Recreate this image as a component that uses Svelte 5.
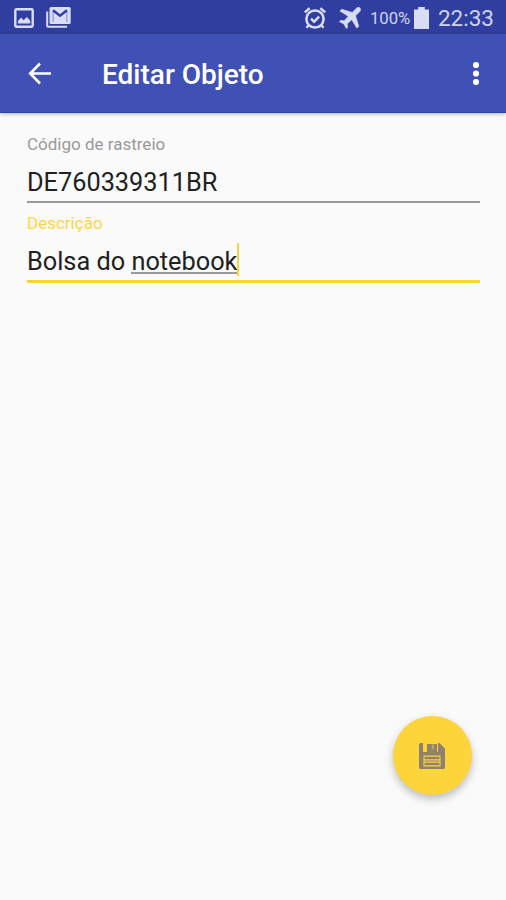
<script lang="ts">
    let code = "DE760339311BR";
    let words = ["Bolsa do ", "notebook"];
</script>

<div class="screen">
    <div class="status">
        <svg class="photo" width="20" height="20" viewBox="0 0 20 20">
            <rect x="1.3" y="1.3" width="17.4" height="17.4" rx="1.2" />
            <path d="M4 15.5V13l3.2-3.4 2.3 2.6L13 9l3.2 3.8v2.7z" />
        </svg>
        <svg class="mail" width="25" height="21" viewBox="0 0 25 21">
            <path class="back" d="M1.2 4.5v14.3q0 1 1 1H21" />
            <rect x="3.5" y="0" width="21.2" height="17" rx="1.6" />
            <path class="fold" d="M7.2 15V4M20.8 15V4" />
            <path class="flap" d="M7 3.2l7 5.6 7-5.6" />
        </svg>
        <span class="space"></span>
        <svg class="alarm" width="24" height="24" viewBox="0 0 24 24">
            <circle cx="12" cy="13" r="8.6" />
            <path d="M1.8 6.4l4.8-4.2M22.2 6.4l-4.8-4.2M5.5 19.5l-2 2.3M18.5 19.5l2 2.3M8 12.7l3.1 3.1 5-5.2" />
        </svg>
        <svg class="plane" width="22" height="22" viewBox="0 0 22 22">
            <path d="M21 1c-1.1-1.1-2.7-.7-3.8.4l-4 4L2.7 2.2.8 4.1l8.5 5.2-4.2 4.5-3.3-.5L.4 14.7l4.5 2.4 2.4 4.5 1.4-1.4-.5-3.3 4.5-4.2 5.2 8.5 1.9-1.9-3.2-10.5 4-4C21.7 3.7 22.1 2.1 21 1z" />
        </svg>
        <span class="percent">100%</span>
        <svg class="battery" width="15" height="22" viewBox="0 0 15 22">
            <path d="M4.2 0h6.6v2.5H15V22H0V2.5h4.2z" />
        </svg>
        <span class="clock">22:33</span>
    </div>
    <header>
        <button class="back-button" aria-label="Voltar">
            <svg width="24" height="24" viewBox="0 0 24 24">
                <path d="M23 12.5H2.5M12 2.5L2.2 12.5 12 22.5" />
            </svg>
        </button>
        <h1>Editar Objeto</h1>
        <button class="more" aria-label="Mais">
            <svg width="8" height="24" viewBox="0 0 8 24">
                <circle cx="4" cy="4" r="3.1" />
                <circle cx="4" cy="12.5" r="3.1" />
                <circle cx="4" cy="21" r="3.1" />
            </svg>
        </button>
    </header>
    <main>
        <div class="field">
            <span class="label">Código de rastreio</span>
            <div class="value">{code}</div>
        </div>
        <div class="field active">
            <span class="label">Descrição</span>
            <div class="value">{words[0]}<span class="composing">{words[1]}</span><i class="caret"></i></div>
        </div>
    </main>
    <button class="fab" aria-label="Salvar">
        <svg width="26" height="26" viewBox="0 0 26 26">
            <path fill-rule="evenodd" d="M1.5 0H4v8q0 1 1 1h13q1 0 1-1V0h1.5L26 5.5v19q0 1.5-1.5 1.5h-23Q0 26 0 24.5v-23Q0 0 1.5 0zM4.5 12.5v11h17v-11z" />
            <path d="M8 1h10v8H8zM5.5 13.7h15v2.5h-15zM5.5 17.4h15v1.2h-15zM5.5 19.8h15v2.5h-15z" />
            <path class="notch" d="M12.8 1.5H15v4.7h-2.2z" />
        </svg>
    </button>
</div>

<style>
    :global(body) {
        margin: 0;
    }
    .screen {
        position: relative;
        height: 900px;
        background-color: #fafafa;
        font-family: Roboto, "Liberation Sans", sans-serif;
        overflow: hidden;
    }
    svg {
        display: block;
        flex-shrink: 0;
    }
    button {
        padding: 0;
        border: 0;
        background: none;
    }
    .status {
        display: flex;
        align-items: center;
        box-sizing: border-box;
        height: 34px;
        padding: 1px 12px 0 14px;
        background-color: #303f9f;
        color: #d0d4f0;
        fill: #d9dcf5;
    }
    .photo rect {
        fill: none;
        stroke: #d9dcf5;
        stroke-width: 2.4;
    }
    .mail {
        margin-left: 12px;
    }
    .mail .back {
        fill: none;
        stroke: #d9dcf5;
        stroke-width: 2;
    }
    .mail .fold {
        fill: none;
        stroke: #8f98d0;
        stroke-width: 1.2;
    }
    .mail .flap {
        fill: none;
        stroke: #303f9f;
        stroke-width: 2.4;
    }
    .space {
        flex-grow: 1;
    }
    .alarm {
        fill: none;
        stroke: #d9dcf5;
        stroke-width: 2.5;
    }
    .plane {
        margin-left: 12px;
        stroke: #d9dcf5;
        stroke-width: 0.5;
    }
    .percent {
        width: 41px;
        margin-left: 9px;
        padding-top: 2px;
        font-size: 16.7px;
        white-space: nowrap;
    }
    .battery {
        margin-left: 3px;
    }
    .clock {
        margin-left: 9px;
        font-size: 22.5px;
        padding-top: 1px;
    }
    header {
        display: flex;
        align-items: center;
        box-sizing: border-box;
        height: 79px;
        padding: 0 26px 0 28px;
        background-color: #3f51b5;
        border-bottom: 1px solid #2745a3;
        box-shadow: 0 1px 4px rgba(0, 0, 0, 0.3);
        color: #fff;
    }
    .back-button svg {
        fill: none;
        stroke: #fff;
        stroke-width: 2.6;
    }
    h1 {
        flex-grow: 1;
        margin: 4px 0 0 50px;
        font-size: 28px;
        font-weight: 500;
        line-height: 32px;
    }
    .more {
        fill: #fff;
    }
    main {
        padding: 20px 26px 0 27px;
    }
    .field {
        box-sizing: border-box;
        height: 79px;
        color: #999;
    }
    .label {
        display: block;
        height: 22px;
        font-size: 17px;
        line-height: 22px;
    }
    .value {
        display: flex;
        box-sizing: border-box;
        height: 48px;
        padding-top: 12px;
        border-bottom: 2px solid #999;
        color: #212121;
        font-size: 25.3px;
        line-height: 32px;
        white-space: pre;
    }
    .active .label {
        color: #fdd545;
    }
    .active .value {
        height: 49px;
        border-bottom: 3px solid #fdd532;
    }
    .composing {
        height: 26px;
        border-bottom: 2px solid #999;
    }
    .caret {
        width: 2px;
        height: 33px;
        margin-top: -3px;
        background-color: #fdd532;
    }
    .fab {
        position: absolute;
        right: 34px;
        bottom: 105px;
        display: flex;
        align-items: center;
        justify-content: center;
        box-sizing: border-box;
        width: 79px;
        height: 79px;
        padding-right: 1px;
        border-radius: 50%;
        background-color: #fdd53a;
        box-shadow: 0 4px 8px rgba(0, 0, 0, 0.25);
        fill: #90826c;
    }
    .notch {
        fill: #fdd53a;
        opacity: 0.45;
    }
</style>
